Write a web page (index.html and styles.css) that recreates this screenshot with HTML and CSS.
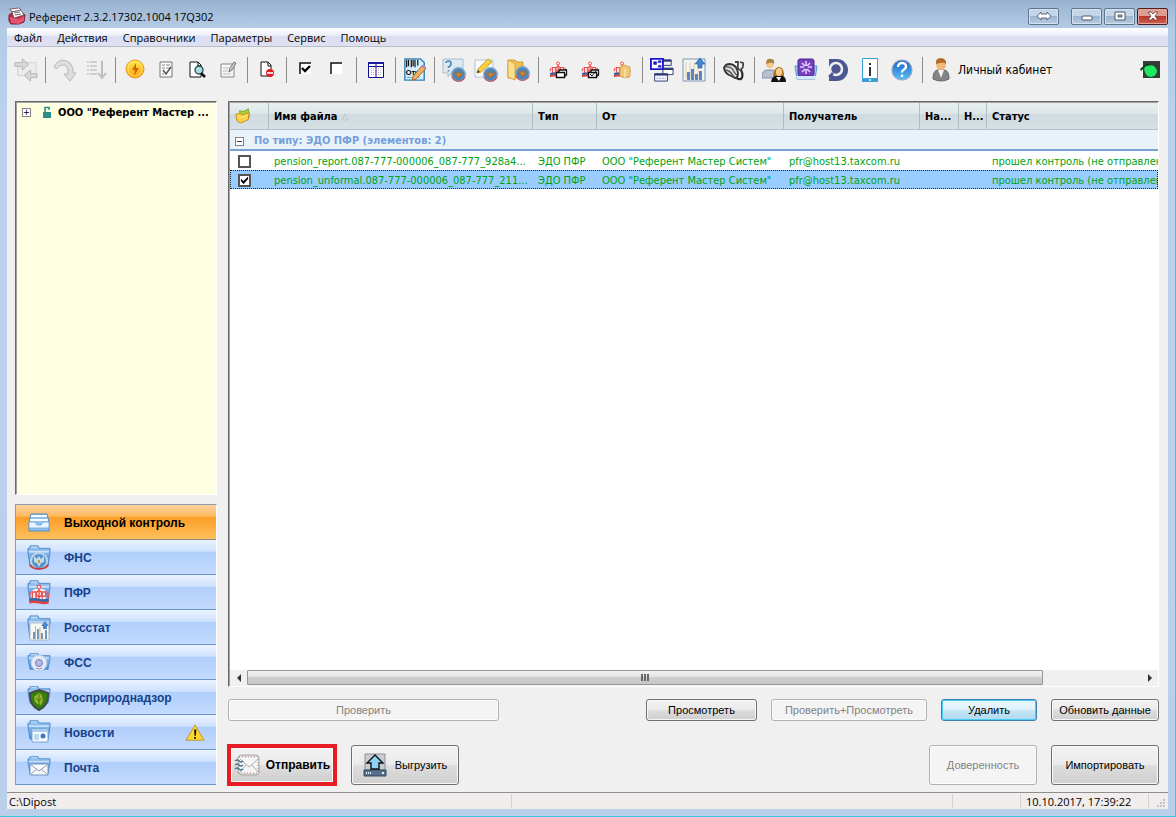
FILE: index.html
```html
<!DOCTYPE html>
<html lang="ru">
<head>
  <meta charset="UTF-8">
  <meta name="viewport" content="width=device-width, initial-scale=1.0">
  <title>Референт</title>
  <link rel="stylesheet" href="styles.css">
</head>
<body>
  <svg class="defs" width="0" height="0" aria-hidden="true">
    <defs>
      <linearGradient id="blueFolder" x1="0" y1="0" x2="0" y2="1">
        <stop offset="0" stop-color="#9cc8f2"/><stop offset="1" stop-color="#4f8fd6"/>
      </linearGradient>
      <linearGradient id="gold" x1="0" y1="0" x2="0" y2="1">
        <stop offset="0" stop-color="#fff04a"/><stop offset="1" stop-color="#ff9a10"/>
      </linearGradient>
      <linearGradient id="helpBlue" x1="0" y1="0" x2="0" y2="1">
        <stop offset="0" stop-color="#1d5fc4"/><stop offset="1" stop-color="#56c2fa"/>
      </linearGradient>
      <symbol id="folder" viewBox="0 0 24 26" preserveAspectRatio="none">
        <path d="M1 7V4h2V1h8l1 3h11v5l-2 16H3L1 9z" fill="url(#blueFolder)" stroke="#4c86c6"/>
        <path d="M2 7h20v2H2z" fill="#cfe5fb"/><path d="M4 2h6v1H4z" fill="#d6e9fc"/>
      </symbol>
      <symbol id="emblem" viewBox="0 0 14 14">
        <circle cx="7" cy="7" r="6.200" fill="#4a86bd" stroke="#7ba3c8" stroke-width="1.400"/>
        <path d="M1 9a6.300 6.300 0 0 0 12 0" fill="none" stroke="#c0605c" stroke-width="1.200"/>
        <path d="M3 4l2 1.500L7 4l2 1.500L11 4l-.5 4L8.500 9 7 11 5.500 9l-2-1z" fill="#a8733c"/>
        <path d="M6 6h2v2H6z" fill="#d29a4c"/>
      </symbol>
      <symbol id="pfr" viewBox="0 0 18 18">
        <path d="M4 5l3-1 2-3 2 3 3 1 1 5-1 3H3l-1-4z" fill="#fff4f4"/>
        <circle cx="9" cy="2.500" r="1.500" fill="none" stroke="#f25454"/>
        <path d="M3.500 12V6.500h3V12M9 4v9M11.500 12V6.500h3V10h-3M1 10l1-3M16 7l1 4" fill="none" stroke="#ee5050" stroke-width="1.200"/>
        <circle cx="9" cy="8" r="2.300" fill="none" stroke="#ee5050" stroke-width="1.200"/>
        <path d="M1 12q4-1 8 0t8 0v4q-4 1-8 0t-8 0z" fill="#e04444"/>
        <path d="M1 12q4-1 8 0t8 0v2q-4 1-8 0t-8 0z" fill="#2f6bac"/>
      </symbol>
    </defs>
  </svg>

  <div class="window">
    <header class="titlebar">
      <svg class="app-icon" viewBox="0 0 18 18" width="18" height="18">
        <path d="M1 8l3-2 10-1 3 3-1 7-5 2H3l-2-3z" fill="#c02a48" stroke="#7c2034"/>
        <path d="M2 2l9-1 2 2-9 2z" fill="#fff" stroke="#694650" stroke-width=".8"/>
        <path d="M4 5l9-2 3 5-10 3z" fill="#fff" stroke="#694650" stroke-width=".8"/>
        <path d="M6 6l6-1M7 8l6-1" stroke="#666"/><path d="M2 10l9 2 5-3v5l-5 3-8-1z" fill="#e0556c"/>
      </svg>
      <span class="title">Референт 2.3.2.17302.1004 17Q302</span>
      <div class="window-buttons">
        <button class="win-btn switch" aria-label="Переключить">
          <svg viewBox="0 0 16 10" width="16" height="10"><path d="M1 5l4-4v2h6V1l4 4-4 4V7H5v2z" fill="#fff" stroke="#5c6b80"/></svg>
        </button>
        <button class="win-btn" aria-label="Свернуть">
          <svg viewBox="0 0 12 10" width="12" height="10"><rect x="1" y="5" width="10" height="4" rx="1" fill="#fff" stroke="#4c5869"/></svg>
        </button>
        <button class="win-btn" aria-label="Развернуть">
          <svg viewBox="0 0 12 10" width="12" height="10"><path d="M1 1h10v8H1zM4 4v2h4V4z" fill="#fff" fill-rule="evenodd" stroke="#4c5869"/></svg>
        </button>
        <button class="win-btn close" aria-label="Закрыть">
          <svg viewBox="0 0 12 10" width="12" height="10"><path d="M1 1h3l2 2 2-2h3L8 5l3 4H8L6 7 4 9H1l3-4z" fill="#fff" stroke="#5a3a40" stroke-width=".8"/></svg>
        </button>
      </div>
    </header>

    <div class="client">
      <nav class="menu">
        <button>Файл</button>
        <button>Действия</button>
        <button>Справочники</button>
        <button>Параметры</button>
        <button>Сервис</button>
        <button>Помощь</button>
      </nav>

      <div class="toolbar">
        <div class="tools">
          <button class="tool" aria-label="Обмен">
            <svg viewBox="0 0 26 26"><g fill="#d8d8d8" stroke="#b4b4b4"><path d="M6 5h18v14H4V9z" fill="#ececec" stroke="#d0d0d0"/><path d="M1 5h8V1l7 6-7 6V9H1z"/><path d="M25 17h-7v-4l-7 6 7 6v-4h7z"/></g></svg>
          </button>
          <i class="sep"></i>
          <button class="tool" aria-label="Повторить">
            <svg viewBox="0 0 24 24"><path d="M1 8Q8-2 17 5q4 4 3 10h3l-6 8-6-7h4q1-7-4-9-4-1-8 4z" fill="#dedede" stroke="#b9b9b9"/></svg>
          </button>
          <button class="tool" aria-label="Сортировка">
            <svg viewBox="0 0 24 24"><path d="M3 4h11M3 8h11M3 12h11M3 16h11" stroke="#cfcfcf" stroke-width="2" stroke-dasharray="2 1 7"/><path d="M18 3v15M14 15l4 5 4-5" fill="none" stroke="#bdbdbd" stroke-width="2"/></svg>
          </button>
          <i class="sep"></i>
          <button class="tool" aria-label="Быстрая отправка">
            <svg viewBox="0 0 24 24"><circle cx="12" cy="11" r="9" fill="url(#gold)" stroke="#e89a24"/><circle cx="12" cy="11" r="7" fill="none" stroke="#ffe66a"/><path d="M13 5l-4 7h3l-1 6 5-8h-3z" fill="#d3630a"/></svg>
          </button>
          <button class="tool" aria-label="Проверка">
            <svg viewBox="0 0 24 24"><path d="M6 4h12v15H6z" fill="#fafafa" stroke="#777"/><path d="M8 7h3m1 0h4M8 10h3m1 0h4M8 16h2" stroke="#888"/><path d="M9 12l3 4 5-7" fill="none" stroke="#555" stroke-width="1.500"/></svg>
          </button>
          <button class="tool" aria-label="Просмотр">
            <svg viewBox="0 0 24 24"><path d="M5 19V4h8l3 3v12z" fill="#fff" stroke="#111"/><path d="M13 4v4h3" fill="none" stroke="#111"/><circle cx="14" cy="12" r="4" fill="#a5dce2" stroke="#28464d" stroke-width="1.300"/><path d="M16 15l4 4" stroke="#111" stroke-width="2.500"/></svg>
          </button>
          <button class="tool" aria-label="Изменить">
            <svg viewBox="0 0 24 24"><path d="M5 6h13v13H5z" fill="#f7f7f7" stroke="#888"/><path d="M7 10h6M7 13h5M7 16h8" stroke="#bbb"/><path d="M13 14l1-4 4-6 2 1-4 7z" fill="#ccc" stroke="#777"/></svg>
          </button>
          <i class="sep"></i>
          <button class="tool" aria-label="Удалить документ">
            <svg viewBox="0 0 24 24"><path d="M6 18V4h7l3 3v11z" fill="#fff" stroke="#111"/><path d="M13 4v4h3" fill="none" stroke="#111"/><circle cx="15" cy="15" r="4" fill="#e21c24"/><path d="M12 15h6" stroke="#fff" stroke-width="1.600"/></svg>
          </button>
          <i class="sep"></i>
          <button class="tool" aria-label="Отметить все">
            <svg viewBox="0 0 24 24"><path d="M6 6h11v10H6z" fill="#fff"/><path d="M6 16V5h11" fill="none" stroke="#111" stroke-width="1.500"/><path d="M8 10l3 3 5-5" fill="none" stroke="#000" stroke-width="2.400"/></svg>
          </button>
          <button class="tool" aria-label="Снять отметки">
            <svg viewBox="0 0 24 24"><path d="M6 6h11v10H6z" fill="#fff"/><path d="M6 16V5h11" fill="none" stroke="#111" stroke-width="1.500"/></svg>
          </button>
          <i class="sep"></i>
          <button class="tool" aria-label="Столбцы">
            <svg viewBox="0 0 24 24"><path d="M4.500 4.500h15v15h-15z" fill="#fff" stroke="#10108c"/><path d="M4 4h16v2H4z" fill="#1a1aa0"/><path d="M5 8.500h14M12 5v15" stroke="#10108c"/><path d="M7.500 10v8M14.500 10v8" stroke="#e99" stroke-dasharray="1 1"/><path d="M9.500 10v8M16.500 10v8" stroke="#9ce" stroke-dasharray="1 1"/></svg>
          </button>
          <i class="sep"></i>
          <button class="tool" aria-label="Отчёт">
            <svg viewBox="0 0 26 26"><path d="M2 1h17l4 4v19H2z" fill="#d7effc" stroke="#2f83b4" stroke-width="1.500"/><path d="M4 2v8M6 2v7M9 2v8M11 2v7M13 2v8M16 2v6" stroke="#111" stroke-width="1.300"/><text x="3" y="18" class="icon-label">Отч</text><path d="M4 21h14" stroke="#58a4cf"/><path d="M10 24l1-4L21 8l4 3-11 12z" fill="#f6b15a" stroke="#99602a"/><path d="M20 9l2-2 3 3-2 2z" fill="#b08ac4"/></svg>
          </button>
          <i class="sep"></i>
        </div>
        <div class="tools tools-wide">
          <button class="tool" aria-label="Запрос">
            <svg viewBox="0 0 24 24"><path d="M1 1h20v14H9l-3 4v-4H1z" fill="#dce9f3" stroke="#a9bfd0"/><path d="M4 5q0-2 2.500-2T9 5.500 6.500 9v1M6.500 12v1.500" fill="none" stroke="#4e86b4" stroke-width="1.600"/><use href="#emblem" x="9" y="9" width="15" height="15"/></svg>
          </button>
          <button class="tool" aria-label="Письмо">
            <svg viewBox="0 0 24 24"><path d="M1 2h18v17H1z" fill="#f7f9fb" stroke="#b4c4d2"/><path d="M3 15l1-4L14 1l4 3L7 14z" fill="#fbd143" stroke="#cf9d20"/><path d="M3 15l1-3 2 2z" fill="#333"/><use href="#emblem" x="9" y="9" width="15" height="15"/></svg>
          </button>
          <button class="tool" aria-label="Папка">
            <svg viewBox="0 0 24 24"><path d="M2 2h7l2 2h6v16H2z" fill="#eebe50" stroke="#cf9d3d"/><path d="M2 2l7 4v16l-7-3z" fill="#fde08a" stroke="#d5a746"/><use href="#emblem" x="9" y="8" width="15" height="15"/></svg>
          </button>
          <i class="sep"></i>
          <button class="tool" aria-label="ПФР пакет">
            <svg viewBox="0 0 24 24"><use href="#pfr" x="3" y="3" width="18" height="18"/><path d="M10.500 14.500h8v5h-8zM13 14v-2h7.500v5H19" fill="#fff" stroke="#111" stroke-width="1.300"/></svg>
          </button>
          <button class="tool" aria-label="ПФР проверка">
            <svg viewBox="0 0 24 24"><use href="#pfr" x="3" y="3" width="18" height="18"/><path d="M10.500 14.500h8v5h-8zM13 14v-2h7.500v5H19" fill="#fff" stroke="#111" stroke-width="1.300"/><path d="M12 16l2 2 4-5" fill="none" stroke="#111"/></svg>
          </button>
          <button class="tool" aria-label="ПФР папка">
            <svg viewBox="0 0 24 24"><use href="#pfr" x="3" y="3" width="18" height="18"/><path d="M10 9l4-2 6 2v9l-5 2-5-2z" fill="#f0c878" stroke="#d5a352"/><path d="M15 11v9" stroke="#fff1c0"/></svg>
          </button>
          <i class="sep"></i>
          <button class="tool" aria-label="Окна">
            <svg viewBox="0 0 26 26"><path d="M14 2h9v6h-9z" fill="#eef0fa" stroke="#2c376f"/><path d="M14 2h9v2h-9z" fill="#2c376f"/><path d="M14 11h11v7H14z" fill="#fff" stroke="#2c376f"/><path d="M14 11h11v2H14z" fill="#2c376f"/><path d="M1 1h13v11H1z" fill="#fff" stroke="#1818c8" stroke-width="2"/><path d="M4 4h3v3H4zM9 3h3v2H9zM9 8h3v2H9zM7 5h2" fill="#1818c8" stroke="#1818c8" stroke-width=".5"/><path d="M5 17h14v8H5z" fill="#f4f6ff" stroke="#2c376f"/><path d="M5 17h14v2H5z" fill="#2c376f"/><path d="M7 22h10" stroke="#9aabcb" stroke-dasharray="2 1"/></svg>
          </button>
          <button class="tool" aria-label="Статистика">
            <svg viewBox="0 0 24 24"><path d="M1 1h22v22H1z" fill="#f5f5f0" stroke="#7896b8"/><path d="M4 4v17M8 4v17M12 4v17M16 8v13" stroke="#dcc9ae"/><path d="M5 22v-8h3v8M9 22V11h3v11M13 22v-6h3v6M17 22v-9h3v9" fill="#5b86bd"/><path d="M16 10V6h-3l5-6 5 6h-3v4z" fill="#4387cf" stroke="#2a62a4" stroke-width=".7"/></svg>
          </button>
          <i class="sep"></i>
          <button class="tool" aria-label="Диагностика">
            <svg viewBox="0 0 24 24"><path d="M13 4h3v2q-1 5 2 6 4-2 3-7l-3-1" fill="none" stroke="#444" stroke-width="1.800"/><path d="M19 12q3 6 0 9-4 1-5-3" fill="none" stroke="#2b2b2b" stroke-width="2.200"/><path d="M2 10q1-4 6-4 7 1 8 9 0 5-3 5-3-2-6-3-4-2-5-7z" fill="#ddd" stroke="#333" stroke-width="1.800"/><path d="M3 9q6-1 8 3t4 5M3 12q5 0 9 7" fill="none" stroke="#555" stroke-width="1.300"/></svg>
          </button>
          <i class="sep"></i>
          <button class="tool" aria-label="Пользователи">
            <svg viewBox="0 0 24 24"><path d="M0 20q0-8 5-8h6q4 1 4 8z" fill="#b8bfce" stroke="#8991a6"/><circle cx="8" cy="6" r="4" fill="#f4c68c"/><path d="M4 6q0-6 5-5 4 0 3 5-2-3-8 0z" fill="#a9823c"/><path d="M9 24q1-7 8-7t7 7z" fill="#111"/><path d="M11 18q1-9 6-9t5 9z" fill="#b67118"/><ellipse cx="17" cy="14" rx="3" ry="4" fill="#f7cd95"/><path d="M14 19l3 4 2-4z" fill="#fff"/></svg>
          </button>
          <button class="tool" aria-label="Сертификаты">
            <svg viewBox="0 0 24 24"><path d="M1 8h22l-2 13H3z" fill="#a8cdf2" stroke="#5d96cf"/><rect x="4" y="1" width="16" height="17" rx="2" fill="#7440c0" stroke="#4d278f"/><g stroke="#e8c9fb" stroke-width="1.600"><path d="M12 3v5M12 11v5M6 9h4M14 9h4M8 5l3 3M16 5l-3 3M8 14l3-3M16 14l-3-3"/></g><path d="M2 18h20v3H3z" fill="#d4e8fb"/></svg>
          </button>
          <button class="tool" aria-label="Поиск">
            <svg viewBox="0 0 24 24"><path d="M3 1h8a11 11 0 0 1 0 22H3v-3l4-4a6 6 0 1 0-3-7H3z" fill="#4a5791"/><circle cx="10" cy="11" r="6" fill="#4a5791" stroke="#f0f0f0" stroke-width="2.500"/><path d="M7 15l-4 4" stroke="#4a5791" stroke-width="2.500"/></svg>
          </button>
          <button class="tool" aria-label="Информация">
            <svg viewBox="0 0 24 24"><path d="M4.500.5h15v23h-15z" fill="#fff" stroke="#39a0d2"/><path d="M4 20h16v4H4z" fill="#39a0d2"/><circle cx="12" cy="22" r="1" fill="#fff"/><path d="M11 5h2v2h-2zM11 9h2v9h-2z" fill="#333"/></svg>
          </button>
          <button class="tool" aria-label="Справка">
            <svg viewBox="0 0 24 24"><circle cx="12" cy="12" r="10" fill="url(#helpBlue)" stroke="#9aa7bd" stroke-width="1.200"/><path d="M8 9q0-4 4-4t4 3.500q0 2-2 3t-2 3M12 16.500V19" fill="none" stroke="#fff" stroke-width="2.400"/></svg>
          </button>
          <i class="sep"></i>
          <button class="cabinet">
            <svg viewBox="0 0 24 24"><path d="M4 21q0-9 5-9h6q5 0 5 9-8 4-16 0z" fill="#858585" stroke="#686868"/><path d="M9 12l3 8 3-8z" fill="#f2f2f2"/><circle cx="12" cy="7" r="5" fill="#f2b878"/><path d="M7 6q-1-6 5-6 6 1 5 6-2-3-10 0z" fill="#b4692a"/></svg>
            Личный кабинет
          </button>
        </div>
        <svg class="signal" viewBox="0 0 20 18" width="20" height="18"><path d="M3 0h17v17H3z" fill="#333c37"/><path d="M4 7q2-3 6-3l4 1 3 4q0 6-6 7-6 0-7-9z" fill="#1bea60"/><path d="M0 8l7-6 5 2-6 1-5 5z" fill="#113d1c"/></svg>
      </div>

      <main class="workspace">
        <aside class="sidebar">
          <div class="tree">
            <div class="tree-item">
              <button class="expander" aria-label="Развернуть узел">+</button>
              <svg viewBox="0 0 10 12" width="10" height="12"><path d="M1 6h8v6H1z" fill="#2b8f88"/><path d="M3 6V1.500h4V4" fill="none" stroke="#2b8f88" stroke-width="1.600"/></svg>
              <span>ООО "Референт Мастер ...</span>
            </div>
          </div>
          <nav class="sections">
            <button class="section active">
              <svg viewBox="0 0 24 26"><path d="M2 12l2-8h16l2 8v9H2z" fill="#8fc0ea" stroke="#4e8dcc"/><path d="M4 5h16v2H4zM3 9h18v2H3z" fill="#f5faff"/><path d="M2 12h6l2 3h4l2-3h6v6H2z" fill="#e9f4fe" stroke="#6ba5dc" stroke-width=".8"/></svg>
              <span>Выходной контроль</span>
            </button>
            <button class="section">
              <svg viewBox="0 0 24 26"><use href="#folder" width="24" height="22"/><circle cx="12" cy="16" r="8" fill="#5595cc" stroke="#b9d6ea" stroke-width="2"/><path d="M3 20a10 7 0 0 0 18 0" fill="none" stroke="#c53e48" stroke-width="2"/><path d="M7 11l3 3 2-3 2 3 3-3v6l-3 1-2 4-2-4-3-1z" fill="#c8dbe8"/><path d="M11 15h2v3h-2z" fill="#c79a58"/></svg>
              <span>ФНС</span>
            </button>
            <button class="section">
              <svg viewBox="0 0 24 26"><use href="#folder" width="24" height="22"/><use href="#pfr" x="1" y="4" width="22" height="22"/></svg>
              <span>ПФР</span>
            </button>
            <button class="section">
              <svg viewBox="0 0 24 26"><use href="#folder" width="24" height="24"/><path d="M3 8h19v17H3z" fill="#faf8f2" stroke="#a9b7c6"/><path d="M6 24v-7h2v7M10 24V14h2v10M14 24v-6h2v6M18 24v-9h2v9" fill="#7597bb"/><path d="M8.500 11v13M13 12v12" stroke="#d5b38a"/><path d="M16 14v-3h-2l4-5 4 5h-2v3z" fill="#4886cb"/></svg>
              <span>Росстат</span>
            </button>
            <button class="section">
              <svg viewBox="0 0 24 26"><use href="#folder" y="3" width="24" height="17"/><circle cx="12" cy="13" r="8" fill="#e4e9f5" stroke="#a9bde1" stroke-dasharray="2 1"/><circle cx="12" cy="13" r="3.500" fill="#b6b8e2" stroke="#7980bf"/><path d="M9 18q3 2 6 0" fill="none" stroke="#8691c5"/></svg>
              <span>ФСС</span>
            </button>
            <button class="section">
              <svg viewBox="0 0 24 26"><use href="#folder" y="1" width="24" height="18"/><path d="M12 5l9 3q1 12-9 17Q2 20 3 8z" fill="#35830d" stroke="#454b4a" stroke-width="2"/><path d="M12 8q7 4 2 12Q8 20 7 12z" fill="#9cb52f"/><path d="M12 9v12M9 13l3 3 4-4" stroke="#3c7a12" fill="none"/></svg>
              <span>Росприроднадзор</span>
            </button>
            <button class="section">
              <svg viewBox="0 0 24 26"><use href="#folder" width="24" height="20"/><path d="M5 9h16v13H5z" fill="#f5faff" stroke="#7ba5cf"/><path d="M5 9h16v3H5z" fill="#a9cbed"/><path d="M7 15h5M7 17h5M7 19h5" stroke="#8fb3d6"/><circle cx="16" cy="16" r="2.500" fill="#3d78bf"/></svg>
              <span>Новости</span>
              <svg class="warning" viewBox="0 0 22 20" width="22" height="20"><path d="M11 1l10 17H1z" fill="#ffd52e" stroke="#b8912b" stroke-linejoin="round"/><path d="M10 6h2.500l-.5 7h-1.500zM10 14.500h2v2h-2z" fill="#111"/></svg>
            </button>
            <button class="section">
              <svg viewBox="0 0 24 26"><use href="#folder" y="1" width="24" height="18"/><path d="M3 9h18v11H3z" fill="#f7fafe" stroke="#7195bd"/><path d="M4 10l8 6 8-6M4 19l6-5M20 19l-6-5" fill="none" stroke="#8d9cab"/></svg>
              <span>Почта</span>
            </button>
          </nav>
        </aside>

        <section class="content">
          <div class="grid-panel">
            <div class="grid-scroll">
              <table class="files">
                <colgroup>
                  <col class="col-check"><col class="col-name"><col class="col-type"><col class="col-from">
                  <col class="col-to"><col class="col-na"><col class="col-n"><col class="col-status">
                </colgroup>
                <thead>
                  <tr>
                    <th aria-label="Папка">
                      <svg viewBox="0 0 18 18" width="16" height="16"><path d="M5 3l4 1 6-3 1 9-9 3z" fill="#a4d13c" stroke="#79a42e"/><path d="M1 7l5-1 2 2 8-3-1 8-9 4-4-3z" fill="#ffd044" stroke="#b98a18"/><path d="M3 9l3 2 8-3" fill="none" stroke="#fff0a0"/></svg>
                    </th>
                    <th>Имя файла <svg class="sort" viewBox="0 0 8 8" width="8" height="8"><path d="M1 7l3-6 3 6z" fill="none" stroke="#bdc9ce"/></svg></th>
                    <th>Тип</th>
                    <th>От</th>
                    <th>Получатель</th>
                    <th>На...</th>
                    <th>Н...</th>
                    <th>Статус</th>
                  </tr>
                </thead>
                <tbody>
                  <tr class="group">
                    <td colspan="8"><button class="expander" aria-label="Свернуть группу">−</button>По типу: ЭДО ПФР (элементов: 2)</td>
                  </tr>
                  <tr>
                    <td><input type="checkbox" aria-label="pension_report"></td>
                    <td>pension_report.087-777-000006_087-777_928a4...</td>
                    <td>ЭДО ПФР</td>
                    <td>ООО "Референт Мастер Систем"</td>
                    <td>pfr@host13.taxcom.ru</td>
                    <td></td>
                    <td></td>
                    <td>прошел контроль (не отправлен</td>
                  </tr>
                  <tr class="selected">
                    <td><input type="checkbox" aria-label="pension_unformal" checked></td>
                    <td>pension_unformal.087-777-000006_087-777_211...</td>
                    <td>ЭДО ПФР</td>
                    <td>ООО "Референт Мастер Систем"</td>
                    <td>pfr@host13.taxcom.ru</td>
                    <td></td>
                    <td></td>
                    <td>прошел контроль (не отправлен</td>
                  </tr>
                </tbody>
              </table>
            </div>
            <div class="scrollbar">
              <button class="scroll-arrow" aria-label="Влево"><svg viewBox="0 0 4 8" width="4" height="8"><path d="M4 0v8L0 4z" fill="#333"/></svg></button>
              <div class="scroll-track"><div class="scroll-thumb"><i></i><i></i><i></i></div></div>
              <button class="scroll-arrow" aria-label="Вправо"><svg viewBox="0 0 4 8" width="4" height="8"><path d="M0 0v8l4-4z" fill="#333"/></svg></button>
            </div>
          </div>

          <div class="actions">
            <button class="btn btn-check" disabled>Проверить</button>
            <span class="spacer"></span>
            <button class="btn btn-view">Просмотреть</button>
            <button class="btn btn-check-view" disabled>Проверить+Просмотреть</button>
            <button class="btn btn-delete">Удалить</button>
            <button class="btn btn-std">Обновить данные</button>
          </div>
          <div class="actions actions-big">
            <button class="btn btn-send">
              <svg viewBox="0 0 26 24" width="26" height="24"><path d="M4 4q1-2 3-2h16l2 2v16l-2 2H7l-3-2z" fill="#ddd" stroke="#aaa"/><path d="M5 4h19v16H5z" fill="#f5f5f5" stroke="#c77c86" stroke-dasharray="1 2"/><path d="M6 6l9 8 9-8M6 19l6-7M24 19l-6-7" fill="none" stroke="#aaa"/><path d="M1 8q2-2 4 0t4 0M1 12q2-2 4 0t4 0M1 16q2-2 4 0t4 0" fill="none" stroke="#51768f" stroke-width="1.500"/></svg>
              Отправить
            </button>
            <button class="btn btn-std btn-icon">
              <svg viewBox="0 0 24 24" width="24" height="24"><path d="M2 1h20v16H2z" fill="#c9cdd3" stroke="#8b9096"/><path d="M1 17h22v6H1z" fill="#55718d" stroke="#34495e"/><path d="M3 20h1m1 0h1m1 0h1M19 20h2" stroke="#e6edf3" stroke-width="2"/><path d="M8 16v-6H4l8-8 8 8h-4v6z" fill="#8fd2f8" stroke="#111" stroke-width="1.400"/></svg>
              Выгрузить
            </button>
            <span class="spacer"></span>
            <button class="btn btn-std" disabled>Доверенность</button>
            <button class="btn btn-std">Импортировать</button>
          </div>
        </section>
      </main>

      <footer class="status">
        <span class="status-path">C:\Dipost</span>
        <span class="status-mid"></span>
        <span class="status-small"></span>
        <span class="status-time">10.10.2017, 17:39:22</span>
        <svg class="grip" viewBox="0 0 9 9" width="9" height="9"><path d="M6 0h2v2H6zM3 3h2v2H3zM6 3h2v2H6zM0 6h2v2H0zM3 6h2v2H3zM6 6h2v2H6z" fill="#c3c3c3"/></svg>
      </footer>
    </div>
  </div>
</body>
</html>
```

FILE: styles.css
```css
* {
  box-sizing: border-box;
}

body {
  margin: 0;
  font-family: "DejaVu Sans Condensed", "DejaVu Sans", sans-serif;
  font-size: 11px;
  color: #000;
}

button {
  margin: 0;
  padding: 0;
  border: none;
  background: none;
  font: inherit;
  color: inherit;
}

svg {
  flex: none;
}

.defs {
  position: absolute;
}

.window {
  display: flex;
  flex-direction: column;
  height: 100vh;
  padding: 0 7px 7px;
  background: linear-gradient(#97b2d1, #b4cbe5 28px, #bbd1ec 120px, #b9cfea);
  border-right: 1px solid #3cc6e0;
  border-bottom: 1px solid #35cbe2;
}

/* title bar */
.titlebar {
  display: flex;
  align-items: center;
  height: 28px;
  padding-top: 4px;
  font-family: "Open Sans", "Noto Sans", sans-serif;
}

.app-icon {
  margin: 0 3px 0 1px;
}

.title {
  flex: 1;
}

.window-buttons {
  display: flex;
  gap: 2px;
}

.win-btn {
  display: flex;
  align-items: center;
  justify-content: center;
  width: 31px;
  height: 17px;
  border: 1px solid #60758f;
  border-radius: 2px;
  background: linear-gradient(#c4d5e8 45%, #9db5d0 50%, #b6cbe2);
  box-shadow: inset 0 0 0 1px #d5e2f0;
}

.win-btn.switch {
  margin-right: 10px;
}

.win-btn.close {
  border-color: #4f1c20;
  background: linear-gradient(#dd9d90 45%, #b8382a 50%, #d0604c);
  box-shadow: inset 0 0 0 1px #e3a79c;
}

.client {
  flex: 1;
  min-height: 0;
  display: flex;
  flex-direction: column;
  background: #f0f0f0;
}

/* menu */
.menu {
  display: flex;
  gap: 15px;
  height: 19px;
  padding: 0 7px;
  background: linear-gradient(#fff, #eef0f9 40%, #dcdff1 45%, #dfe1f3);
  border-bottom: 1px solid #b7bccb;
  font-family: "Open Sans", "Noto Sans", sans-serif;
}

/* toolbar */
.toolbar {
  display: flex;
  align-items: center;
  height: 46px;
  padding: 0 8px 0 3px;
}

.tools {
  display: flex;
  align-items: center;
}

.tool {
  display: flex;
  align-items: center;
  justify-content: center;
  width: 31px;
  height: 26px;
}

.tools-wide .tool {
  width: 32px;
}

.tool svg,
.cabinet svg {
  width: 24px;
  height: 24px;
}

.icon-label {
  font: bold 8px "Liberation Sans", sans-serif;
}

.sep {
  width: 1px;
  height: 26px;
  margin: 0 3px 0 4px;
  background: #8c8c8c;
}

.cabinet {
  display: flex;
  align-items: center;
  gap: 5px;
  padding-left: 3px;
  font-size: 12px;
}

.signal {
  margin-left: auto;
}

/* main area */
.workspace {
  flex: 1;
  min-height: 0;
  display: grid;
  grid-template-columns: 202px minmax(0, 1fr);
  gap: 11px;
  padding: 8px 9px 7px 8px;
}

.sidebar {
  display: flex;
  flex-direction: column;
  gap: 9px;
}

.tree {
  flex: 1;
  background: #ffffe1;
  border: 1px solid #696969;
  border-right-color: #fff;
  border-bottom-color: #fff;
  box-shadow: inset 1px 1px 0 #a0a0a0;
}

.tree-item {
  display: flex;
  align-items: center;
  height: 20px;
  padding-left: 6px;
  font-weight: bold;
  white-space: nowrap;
}

.tree-item svg {
  margin: 0 6px 0 11px;
}

.expander {
  display: inline-flex;
  align-items: center;
  justify-content: center;
  flex: none;
  width: 9px;
  height: 9px;
  border: 1px solid #848484;
  background: #fff;
  color: #000;
  font-size: 9px;
  font-weight: normal;
  line-height: 7px;
}

.sections {
  border: 1px solid #8b98ad;
  border-right-color: #fff;
  border-bottom: none;
}

.section {
  display: flex;
  align-items: center;
  width: 100%;
  height: 35px;
  padding: 2px 11px 0;
  border-bottom: 1px solid #6b94cc;
  background: linear-gradient(#eaf3ff, #cfe2fe 33%, #b1cffb 36%, #c3dafe);
  color: #15428b;
  font-family: "Liberation Sans", Arial, sans-serif;
  font-size: 12px;
  font-weight: bold;
}

.section.active {
  background: linear-gradient(#fbd3a0, #fdb961 33%, #fd9e26 36%, #fdc05d);
  border-bottom-color: #8b8b83;
  color: #000;
}

.section svg {
  width: 24px;
  height: 26px;
}

.section span {
  margin-left: 13px;
}

.section .warning {
  width: 20px;
  height: 18px;
  margin-left: auto;
}

/* file list */
.content {
  display: flex;
  flex-direction: column;
}

.grid-panel {
  flex: 1;
  min-height: 0;
  display: flex;
  flex-direction: column;
  background: #fff;
  border: 1px solid #696969;
  border-right-color: #fff;
  border-bottom-color: #fff;
  box-shadow: inset 1px 1px 0 #a0a0a0;
}

.grid-scroll {
  flex: 1;
  overflow: hidden;
  padding: 1px 0 0 1px;
}

.files {
  width: 100%;
  table-layout: fixed;
  border-collapse: separate;
  border-spacing: 0;
}

.col-check { width: 39px; }
.col-name { width: 264px; }
.col-type { width: 64px; }
.col-from { width: 187px; }
.col-to { width: 136px; }
.col-na { width: 39px; }
.col-n { width: 28px; }

.files th,
.files td {
  padding: 0 0 0 5px;
  text-align: left;
  white-space: nowrap;
  overflow: hidden;
}

.files th {
  height: 27px;
  background: linear-gradient(#e9f0f0, #dde7e9 40%, #cfdbe0 45%, #d6e0e5);
  border-bottom: 1px solid #b3c2cb;
  border-right: 1px solid #b0bec8;
}

.files th:last-child {
  border-right: none;
}

.files th svg {
  vertical-align: middle;
}

.files td {
  height: 19px;
  padding-top: 1px;
  color: #00a210;
}

.files .group td {
  height: 21px;
  background: #e9f2f8;
  border-bottom: 2px solid #7a9fd6;
  color: #769fdc;
  font-weight: bold;
}

.group .expander {
  margin-right: 10px;
}

.files .selected {
  outline: 1px dotted #222;
  outline-offset: -1px;
}

.files .selected td {
  background: #99ccff;
}

.files input {
  appearance: none;
  display: block;
  width: 13px;
  height: 13px;
  margin: 0 0 0 3px;
  border: 2px solid #555;
  background: #fff;
}

.files input:checked::before {
  content: "";
  display: block;
  width: 9px;
  height: 9px;
  background: #000;
  clip-path: polygon(10% 35%, 40% 60%, 90% 10%, 90% 40%, 40% 95%, 10% 65%);
}

.scrollbar {
  display: flex;
  height: 16px;
  margin-left: 1px;
  background: #f0f0f0;
}

.scroll-arrow {
  display: flex;
  align-items: center;
  justify-content: center;
  width: 17px;
}

.scroll-track {
  flex: 1;
  padding-bottom: 1px;
}

.scroll-thumb {
  display: flex;
  align-items: center;
  justify-content: center;
  gap: 1px;
  width: 89%;
  height: 15px;
  border: 1px solid #979797;
  border-radius: 1px;
  background: linear-gradient(#f3f3f3, #e3e3e3 45%, #cfcfcf 50%, #c6c6c6);
}

.scroll-thumb i {
  width: 2px;
  height: 7px;
  background: #666;
}

/* action buttons */
.actions {
  display: flex;
  gap: 14px;
  margin-top: 12px;
  font-family: "Liberation Sans", Arial, sans-serif;
}

.actions-big {
  margin-top: 24px;
}

.spacer {
  flex: 1;
}

.btn {
  display: flex;
  align-items: center;
  justify-content: center;
  height: 22px;
  border: 1px solid #707070;
  border-radius: 3px;
  background: linear-gradient(#f2f2f2, #ebebeb 48%, #dddddd 52%, #cfcfcf);
  box-shadow: inset 0 0 0 1px #f8f8f8;
  white-space: nowrap;
}

.btn:disabled {
  border-color: #adb2b5;
  background: #f4f4f4;
  box-shadow: inset 0 0 0 1px #fcfcfc;
  color: #838383;
}

.btn-check { width: 271px; }
.btn-view { width: 111px; }
.btn-check-view { width: 156px; }
.btn-std { width: 108px; }

.btn-delete {
  width: 96px;
  border-color: #3c7fb1;
  background: linear-gradient(#eaf6fd, #dff1fb 48%, #c4e5f6 52%, #b0daf0);
  box-shadow: inset 0 0 0 1px #48cdf4;
}

.actions-big .btn {
  height: 40px;
}

.btn-icon {
  gap: 8px;
}

.actions-big .btn-send {
  width: 110px;
  height: 42px;
  margin: -1px 0 -1px -1px;
  gap: 6px;
  border: 4px solid #e81c24;
  border-radius: 0;
  font-size: 12px;
  font-weight: bold;
}

/* status bar */
.status {
  display: flex;
  align-items: center;
  height: 17px;
  border-top: 1px solid #8e8e8e;
  background: #f1edec;
  font-family: "Open Sans", "Noto Sans", sans-serif;
  line-height: 15px;
}

.status span {
  height: 14px;
  border-right: 1px solid #d5d2d1;
  padding-left: 2px;
}

.status-path { flex: 506; }
.status-mid { flex: 441; }
.status-small { width: 68px; }

.status .status-time {
  width: 128px;
  padding-left: 5px;
}

.grip {
  margin: 5px 2px 0 8px;
}
```
